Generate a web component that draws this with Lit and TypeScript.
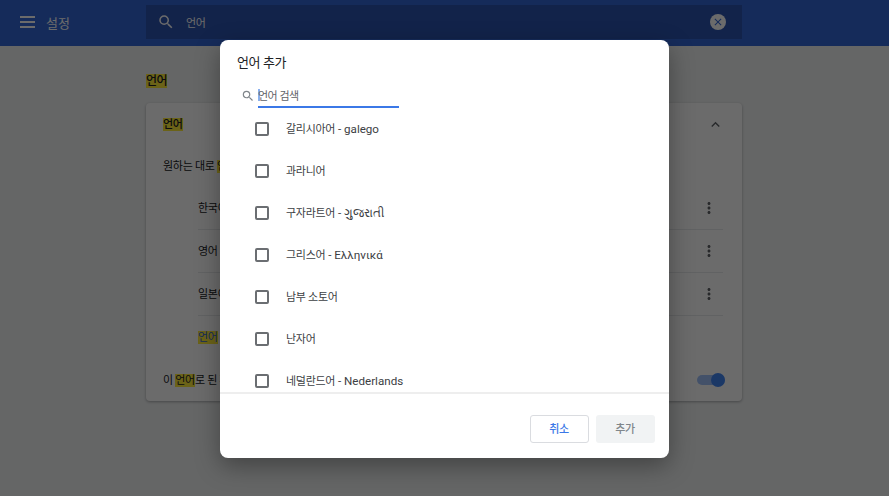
import {LitElement, html, css, svg} from 'lit';
import {customElement} from 'lit/decorators.js';

const languages = [
  {ko: '갈리시아어', native: 'galego'},
  {ko: '과라니어'},
  {ko: '구자라트어', native: 'ગુજરાતી'},
  {ko: '그리스어', native: 'Ελληνικά'},
  {ko: '남부 소토어'},
  {ko: '난자어'},
  {ko: '네덜란드어', native: 'Nederlands'},
];

const searchIcon = svg`<path d="M15.5 14h-.79l-.28-.27A6.47 6.47 0 0 0 16 9.5 6.5 6.5 0 1 0 9.5 16c1.61 0 3.09-.59 4.23-1.57l.27.28v.79l5 4.99L20.49 19l-4.99-5zm-6 0C7.01 14 5 11.99 5 9.5S7.01 5 9.5 5 14 7.01 14 9.5 11.99 14 9.5 14z"/>`;
const moreIcon = svg`<path d="M12 8c1.1 0 2-.9 2-2s-.9-2-2-2-2 .9-2 2 .9 2 2 2zm0 2c-1.1 0-2 .9-2 2s.9 2 2 2 2-.9 2-2-.9-2-2-2zm0 6c-1.1 0-2 .9-2 2s.9 2 2 2 2-.9 2-2-.9-2-2-2z"/>`;

@customElement('app-root')
export class AppRoot extends LitElement {
  static styles = css`
    :host {
      display: block;
      position: relative;
      width: 889px;
      height: 496px;
      overflow: hidden;
      background: #f1f3f4;
      font-family: Roboto, "Noto Sans CJK KR", "Noto Sans", sans-serif;
      font-size: 11px;
      letter-spacing: -0.3px;
      color: #202124;
    }

    svg {
      display: block;
      fill: currentColor;
    }

    mark {
      background: #ffeb3b;
      color: inherit;
    }

    .toolbar {
      display: flex;
      align-items: center;
      height: 46px;
      box-sizing: border-box;
      padding-bottom: 2px;
      background: #3367d6;
      color: #fff;
    }

    .menu {
      display: flex;
      flex-direction: column;
      gap: 3px;
      width: 15px;
      margin-left: 20px;
    }

    .menu span {
      height: 2px;
      background: #fff;
    }

    .app-title {
      width: 100px;
      margin-left: 11px;
      font-size: 13px;
      letter-spacing: 0;
    }

    .search {
      display: flex;
      align-items: center;
      width: 596px;
      height: 34px;
      background: #2c53b0;
    }

    .search-icon {
      width: 18px;
      height: 18px;
      margin-left: 11px;
    }

    .search-text {
      flex: 1;
      margin-left: 11px;
    }

    .clear {
      display: flex;
      align-items: center;
      justify-content: center;
      width: 16px;
      height: 16px;
      margin-right: 16px;
      border-radius: 50%;
      background: #fff;
      color: #3367d6;
    }

    .page {
      width: 596px;
      margin-left: 146px;
    }

    .section-title {
      height: 29px;
      margin-top: 28px;
      line-height: 15px;
      font-size: 12px;
      font-weight: 500;
      letter-spacing: -0.5px;
    }

    .card {
      height: 298px;
      border-radius: 4px;
      background: #fff;
      box-shadow: 0 1px 3px rgba(0, 0, 0, 0.3);
    }

    .card-head {
      display: flex;
      align-items: center;
      justify-content: space-between;
      height: 42px;
      padding: 0 18px 0 17px;
      font-weight: 500;
    }

    .card-head span {
      margin-bottom: 2px;
    }

    .chevron {
      color: #5f6368;
    }

    .card-row {
      display: flex;
      align-items: center;
      height: 42px;
      padding: 0 17px;
    }

    .card-row span {
      margin-bottom: 2px;
    }

    .lang {
      display: flex;
      align-items: center;
      justify-content: space-between;
      height: 43px;
      margin: 0 19px 0 52px;
      border-bottom: 1px solid #e8eaed;
      box-sizing: border-box;
    }

    .lang span {
      margin-bottom: 2px;
    }

    .lang.last {
      height: 42px;
      border-bottom: none;
      color: #3367d6;
    }

    .more {
      width: 18px;
      height: 18px;
      margin-right: 5px;
      color: #5f6368;
    }

    .toggle-row {
      justify-content: space-between;
      height: 43px;
    }

    .toggle {
      position: relative;
      width: 28px;
      height: 10px;
      border-radius: 5px;
      background: #a1c2fa;
    }

    .toggle::after {
      content: '';
      position: absolute;
      top: -2px;
      right: 0;
      width: 14px;
      height: 14px;
      border-radius: 50%;
      background: #4285f4;
    }

    .scrim {
      position: absolute;
      inset: 0;
      background: rgba(0, 0, 0, 0.58);
    }

    .dialog {
      position: absolute;
      left: 220px;
      top: 40px;
      display: flex;
      flex-direction: column;
      width: 449px;
      height: 418px;
      border-radius: 8px;
      background: #fff;
      box-shadow: 0 8px 24px rgba(0, 0, 0, 0.35);
      overflow: hidden;
    }

    .dialog h2 {
      height: 20px;
      margin: 14px 0 0 17px;
      line-height: 18px;
      font-size: 13px;
      font-weight: 400;
      letter-spacing: -0.4px;
    }

    .filter {
      display: flex;
      align-items: center;
      margin: 10px 0 0 21px;
      color: #5f6368;
    }

    .filter svg {
      width: 14px;
      height: 14px;
      margin-right: 3px;
      color: #80868b;
    }

    .field {
      display: flex;
      align-items: center;
      width: 141px;
      height: 24px;
      border-bottom: 2px solid #3b78e7;
      box-sizing: border-box;
      letter-spacing: -0.5px;
    }

    .caret {
      width: 2px;
      height: 12px;
      margin-right: -2px;
      background: #8ab0f0;
    }

    .list {
      flex: 1;
      min-height: 0;
      margin-top: -1px;
      overflow: hidden;
      border-bottom: 2px solid #eeeeee;
      color: #3c4043;
    }

    .item {
      display: flex;
      align-items: center;
      height: 42px;
      padding-left: 35px;
    }

    .box {
      width: 14px;
      height: 14px;
      box-sizing: border-box;
      margin: 2px 17px 0 0;
      border: 2px solid #6b6e72;
      border-radius: 2px;
    }

    .native {
      font-size: 11.6px;
      letter-spacing: 0;
    }

    .actions {
      display: flex;
      justify-content: flex-end;
      gap: 7px;
      padding: 21px 14px 15px 0;
    }

    .btn {
      display: flex;
      align-items: center;
      justify-content: center;
      width: 59px;
      height: 28px;
      box-sizing: border-box;
      padding: 0 1px 2px 0;
      border-radius: 3px;
      font-weight: 500;
    }

    .btn.cancel {
      border: 1px solid #dadce0;
      color: #3b78e7;
    }

    .btn.add {
      background: #f1f3f4;
      color: #80868b;
    }
  `;

  render() {
    return html`
      <div class="toolbar">
        <div class="menu"><span></span><span></span><span></span></div>
        <div class="app-title">설정</div>
        <div class="search">
          <svg class="search-icon" viewBox="0 0 24 24">${searchIcon}</svg>
          <div class="search-text">언어</div>
          <div class="clear">
            <svg width="12" height="12" viewBox="0 0 24 24">
              <path d="M19 6.41 17.59 5 12 10.59 6.41 5 5 6.41 10.59 12 5 17.59 6.41 19 12 13.41 17.59 19 19 17.59 13.41 12z" />
            </svg>
          </div>
        </div>
      </div>

      <div class="page">
        <div class="section-title"><mark>언어</mark></div>
        <div class="card">
          <div class="card-head">
            <span><mark>언어</mark></span>
            <svg class="chevron" width="17" height="17" viewBox="0 0 24 24">
              <path d="M12 8l-6 6 1.41 1.41L12 10.83l4.59 4.58L18 14z" />
            </svg>
          </div>
          <div class="card-row"><span>원하는 대로 <mark>언어</mark>를 정렬하세요.</span></div>
          ${['한국어', '영어', '일본어'].map(
            (name) => html`
              <div class="lang">
                <span>${name}</span>
                <svg class="more" viewBox="0 0 24 24">${moreIcon}</svg>
              </div>
            `,
          )}
          <div class="lang last"><span><mark>언어</mark> 추가</span></div>
          <div class="card-row toggle-row">
            <span>이 <mark>언어</mark>로 된 페이지 번역 제안</span>
            <div class="toggle"></div>
          </div>
        </div>
      </div>

      <div class="scrim"></div>

      <div class="dialog">
        <h2>언어 추가</h2>
        <div class="filter">
          <svg viewBox="0 0 24 24">${searchIcon}</svg>
          <div class="field"><span class="caret"></span>언어 검색</div>
        </div>
        <div class="list">
          ${languages.map(
            (lang) => html`
              <div class="item">
                <span class="box"></span>
                <span>${lang.ko}${lang.native
                  ? html`<span class="native"> - ${lang.native}</span>`
                  : ''}</span>
              </div>
            `,
          )}
        </div>
        <div class="actions">
          <div class="btn cancel">취소</div>
          <div class="btn add">추가</div>
        </div>
      </div>
    `;
  }
}
